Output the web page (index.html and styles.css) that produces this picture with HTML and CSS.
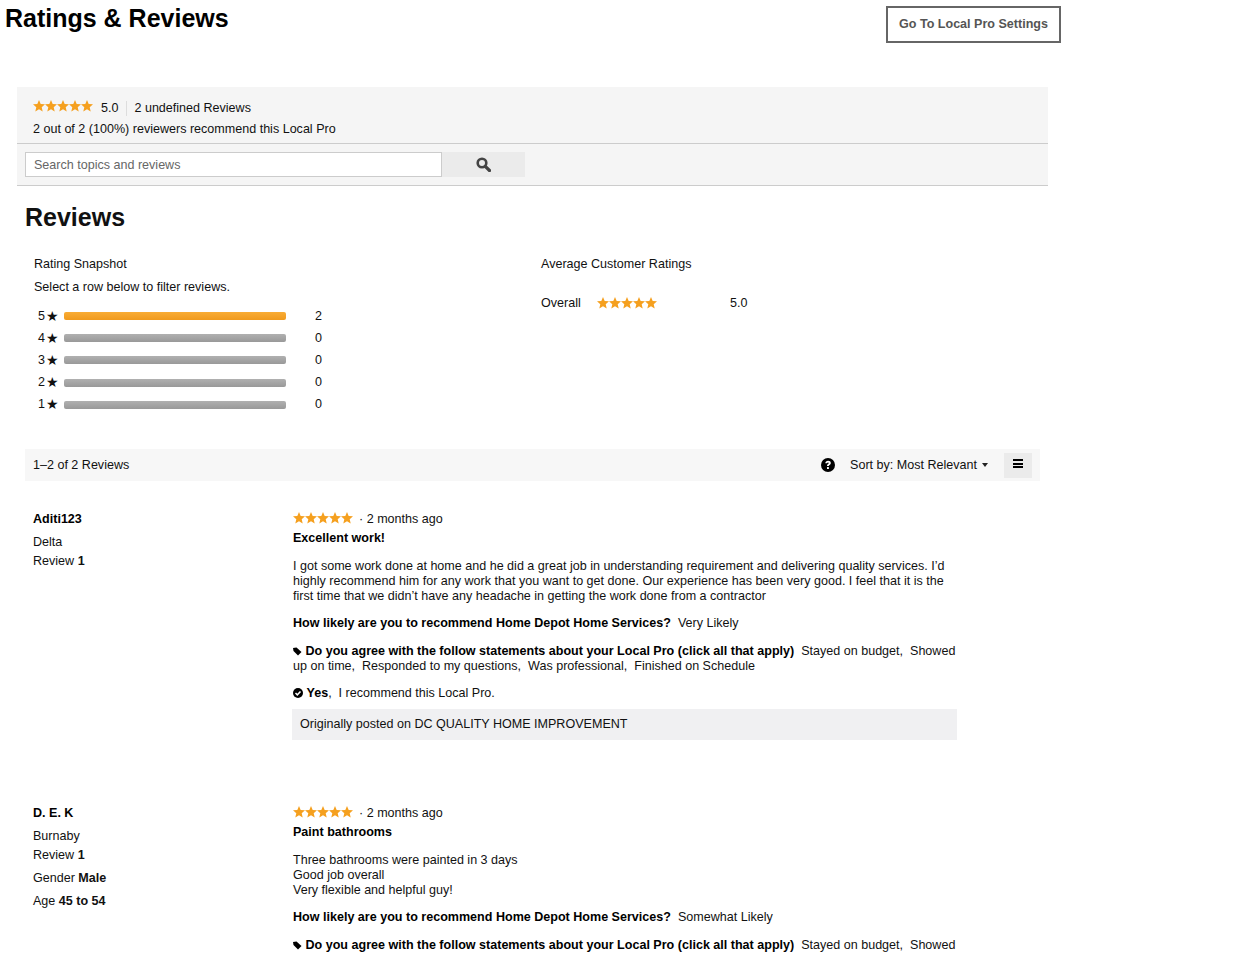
FILE: index.html
```html
<!DOCTYPE html>
<html lang="en">
<head>
    <meta charset="UTF-8">
    <title>Ratings &amp; Reviews</title>
    <link rel="stylesheet" href="styles.css">
</head>
<body>
    <svg class="defs" width="0" height="0">
        <symbol id="star5" viewBox="0 0 60 12">
            <path d="M6 0L7.680 3.990 12 4.350 8.710 7.180 9.700 11.400 6 9.150 2.300 11.400 3.290 7.180 0 4.350 4.320 3.990z"/>
            <path transform="translate(12)" d="M6 0L7.680 3.990 12 4.350 8.710 7.180 9.700 11.400 6 9.150 2.300 11.400 3.290 7.180 0 4.350 4.320 3.990z"/>
            <path transform="translate(24)" d="M6 0L7.680 3.990 12 4.350 8.710 7.180 9.700 11.400 6 9.150 2.300 11.400 3.290 7.180 0 4.350 4.320 3.990z"/>
            <path transform="translate(36)" d="M6 0L7.680 3.990 12 4.350 8.710 7.180 9.700 11.400 6 9.150 2.300 11.400 3.290 7.180 0 4.350 4.320 3.990z"/>
            <path transform="translate(48)" d="M6 0L7.680 3.990 12 4.350 8.710 7.180 9.700 11.400 6 9.150 2.300 11.400 3.290 7.180 0 4.350 4.320 3.990z"/>
        </symbol>
    </svg>

    <header class="top">
        <h1>Ratings &amp; Reviews</h1>
        <a class="settings" href="#">Go To Local Pro Settings</a>
    </header>

    <section class="summary">
        <div class="summary-info">
            <div class="summary-line">
                <svg class="stars"><use href="#star5"/></svg>
                <span class="avg">5.0</span>
                <span class="count">2 undefined Reviews</span>
            </div>
            <div class="recommend">2 out of 2 (100%) reviewers recommend this Local Pro</div>
        </div>
        <div class="search-row">
            <input class="search" type="text" placeholder="Search topics and reviews">
            <button class="search-btn" type="button">
                <svg width="15" height="15" viewBox="0 0 15 15"><circle cx="6" cy="6" r="4.300" fill="none" stroke="#444" stroke-width="2.600"/><path d="M9.300 9.300L13.500 13.500" stroke="#444" stroke-width="3.200" stroke-linecap="round"/></svg>
            </button>
        </div>
    </section>

    <h2 class="reviews-title">Reviews</h2>

    <section class="snapshot">
        <div class="snap-left">
            <div class="snap-head">Rating Snapshot</div>
            <div class="snap-sub">Select a row below to filter reviews.</div>
            <div class="bar-row"><span class="bar-num">5</span><span class="bar-star">★</span><span class="bar bar-on"></span><span class="bar-count">2</span></div>
            <div class="bar-row"><span class="bar-num">4</span><span class="bar-star">★</span><span class="bar"></span><span class="bar-count">0</span></div>
            <div class="bar-row"><span class="bar-num">3</span><span class="bar-star">★</span><span class="bar"></span><span class="bar-count">0</span></div>
            <div class="bar-row"><span class="bar-num">2</span><span class="bar-star">★</span><span class="bar"></span><span class="bar-count">0</span></div>
            <div class="bar-row"><span class="bar-num">1</span><span class="bar-star">★</span><span class="bar"></span><span class="bar-count">0</span></div>
        </div>
        <div class="snap-right">
            <div class="snap-head">Average Customer Ratings</div>
            <div class="overall">
                <span class="overall-label">Overall</span>
                <svg class="stars"><use href="#star5"/></svg>
                <span class="overall-val">5.0</span>
            </div>
        </div>
    </section>

    <div class="toolbar">
        <span>1–2 of 2 Reviews</span>
        <div class="toolbar-right">
            <svg class="help" width="14" height="14" viewBox="0 0 14 14"><circle cx="7" cy="7" r="7" fill="#000"/><path d="M4.300 5.300C4.400 3.700 5.500 2.800 7.100 2.800c1.600 0 2.700.9 2.700 2.200 0 1.100-.7 1.600-1.300 2-.5.300-.7.600-.7 1.100H6c0-1 .3-1.500 1-2 .5-.3.800-.5.800-1 0-.4-.3-.7-.8-.7-.5 0-.8.3-.9.900z" fill="#fff"/><rect x="6" y="9.100" width="1.900" height="1.900" fill="#fff"/></svg>
            <span class="sort">Sort by: Most Relevant</span>
            <span class="caret"></span>
            <span class="list-btn"><span class="list-icon"></span></span>
        </div>
    </div>

    <article class="review review-first">
        <div class="author">
            <div class="author-name">Aditi123</div>
            <div class="author-line">Delta</div>
            <div class="author-line author-count">Review <b>1</b></div>
        </div>
        <div class="body">
            <div class="meta"><svg class="stars"><use href="#star5"/></svg><span>· 2 months ago</span></div>
            <div class="title">Excellent work!</div>
            <p class="text">I got some work done at home and he did a great job in understanding requirement and delivering quality services. I’d highly recommend him for any work that you want to get done. Our experience has been very good. I feel that it is the first time that we didn’t have any headache in getting the work done from a contractor</p>
            <p class="q"><b>How likely are you to recommend Home Depot Home Services?</b>&nbsp; Very Likely</p>
            <p class="q q-tag"><svg class="tag" width="9" height="9" viewBox="0 0 9 9"><path d="M0 1l3.500-.5L8.500 5 5 8.500 .5 4z" fill="#000"/></svg> <b>Do you agree with the follow statements about your Local Pro (click all that apply)</b>&nbsp; Stayed on budget,&nbsp; Showed<br>up on time,&nbsp; Responded to my questions,&nbsp; Was professional,&nbsp; Finished on Schedule</p>
            <p class="q"><svg class="check" width="10" height="10" viewBox="0 0 10 10"><circle cx="5" cy="5" r="5" fill="#000"/><path d="M2.500 5l1.800 1.800 3.200-3.400" fill="none" stroke="#fff" stroke-width="1.500"/></svg> <b>Yes</b>,&nbsp; I recommend this Local Pro.</p>
            <div class="posted">Originally posted on DC QUALITY HOME IMPROVEMENT</div>
        </div>
    </article>

    <article class="review">
        <div class="author">
            <div class="author-name">D. E. K</div>
            <div class="author-line">Burnaby</div>
            <div class="author-line author-count">Review <b>1</b></div>
            <div class="author-line">Gender <b>Male</b></div>
            <div class="author-line">Age <b>45 to 54</b></div>
        </div>
        <div class="body">
            <div class="meta"><svg class="stars"><use href="#star5"/></svg><span>· 2 months ago</span></div>
            <div class="title">Paint bathrooms</div>
            <p class="text">Three bathrooms were painted in 3 days<br>Good job overall<br>Very flexible and helpful guy!</p>
            <p class="q"><b>How likely are you to recommend Home Depot Home Services?</b>&nbsp; Somewhat Likely</p>
            <p class="q q-tag"><svg class="tag" width="9" height="9" viewBox="0 0 9 9"><path d="M0 1l3.500-.5L8.500 5 5 8.500 .5 4z" fill="#000"/></svg> <b>Do you agree with the follow statements about your Local Pro (click all that apply)</b>&nbsp; Stayed on budget,&nbsp; Showed</p>
        </div>
    </article>
</body>
</html>
```

FILE: styles.css
```css
html, body { height: 955px; overflow: hidden; }
body { margin: 0; font-family: "Liberation Sans", Arial, sans-serif; font-size: 12.55px; line-height: 15px; color: #111; background: #fff; }
.defs { display: block; height: 0; }

.top { display: flex; width: 1061px; height: 87px; justify-content: space-between; align-items: flex-start; }
.top h1 { margin: 5px 0 0 5px; font-size: 25px; line-height: 26px; color: #000; }
.settings { margin-top: 6px; width: 175px; height: 37px; box-sizing: border-box; border: 2px solid #666; line-height: 33px; text-align: center; font-size: 12.55px; font-weight: bold; color: #555; text-decoration: none; }

.summary { margin-left: 17px; width: 1031px; background: #f5f5f5; height: 98px; border-bottom: 1px solid #ccc; }
.summary-info { height: 57px; box-sizing: border-box; padding: 14px 16px 0; border-bottom: 1px solid #ccc; }
.summary-line { display: flex; align-items: center; height: 15px; }
.stars { width: 60px; height: 12px; fill: #f5a01f; flex: none; }
.summary-line .stars { margin-top: -5px; }
.avg { margin-left: 8px; padding-right: 8px; border-right: 1px solid #ddd; }
.count { margin-left: 7px; }
.recommend { margin-top: 6px; }
.search-row { display: flex; padding: 8px 8px 0; }
.search { width: 417px; height: 25px; box-sizing: border-box; border: 1px solid #ccc; padding: 0 8px; font: 12.55px "Liberation Sans", Arial, sans-serif; background: #fff; }
.search::placeholder { color: #666; opacity: 1; }
.search-btn { width: 83px; height: 25px; border: 0; background: #ebebeb; padding: 0; display: flex; align-items: center; justify-content: center; }

.reviews-title { margin: 17px 0 0 25px; font-size: 25px; line-height: 28px; color: #111; }

.snapshot { display: flex; margin: 26px 0 0 33px; height: 192px; }
.snap-left { width: 508px; }
.snap-head { line-height: 15px; padding-left: 1px; }
.snap-right .snap-head { padding-left: 0; }
.snap-sub { margin: 8px 0 10px; padding-left: 1px; }
.bar-row { display: flex; align-items: center; height: 22.200px; }
.bar-num { width: 12px; text-align: right; }
.bar-star { width: 16px; margin-left: 1px; font-size: 14px; color: #111; font-family: "DejaVu Sans", sans-serif; }
.bar { width: 222px; height: 8px; margin-left: 2px; background: linear-gradient(#b0b0b0, #999); border-radius: 2px; }
.bar-on { background: linear-gradient(#f9ac35, #f09a1d); }
.bar-count { margin-left: 29px; }
.overall { display: flex; align-items: center; margin-top: 24px; }
.overall .stars { margin-top: -2px; }
.overall-label { width: 56px; }
.overall-val { margin-left: 73px; }

.toolbar { display: flex; justify-content: space-between; align-items: center; margin-left: 25px; width: 1015px; height: 32px; box-sizing: border-box; padding-left: 8px; background: #f7f7f7; }
.toolbar-right { display: flex; align-items: center; }
.sort { margin-left: 15px; }
.caret { margin-left: 5px; border: 3.500px solid transparent; border-top: 4px solid #222; border-bottom: 0; }
.list-btn { display: flex; justify-content: center; width: 28px; height: 25px; margin: 0 8px 0 16px; padding-top: 6px; box-sizing: border-box; background: #ebebeb; }
.list-icon { width: 10px; height: 9px; background: linear-gradient(#000 2px, transparent 2px, transparent 3.500px, #000 3.500px, #000 5.500px, transparent 5.500px, transparent 7px, #000 7px); }

.review { display: flex; margin-left: 33px; }
.review-first { margin-top: 31px; height: 294px; }
.author { width: 260px; }
.author-name { font-weight: bold; color: #000; }
.author-line { margin-top: 4px; padding-top: 4px; }
.author-name + .author-line { margin-top: 0; padding-top: 8px; }
.author-line.author-count { margin-top: 0; }
.body { width: 665px; }
.meta { display: flex; align-items: center; gap: 6px; height: 15px; }
.meta .stars { margin-top: -3px; }
.title { margin-top: 4px; font-weight: bold; color: #000; }
.text { margin: 13px 0 0; }
.q { margin: 12px 0 0; }
.q-tag { margin-top: 13px; }
.q b { color: #000; }
.tag, .check { vertical-align: -1px; }
.posted { margin: 8px 1px 0 -1px; height: 31px; line-height: 31px; padding-left: 8px; background: #f0f0f2; }
```
